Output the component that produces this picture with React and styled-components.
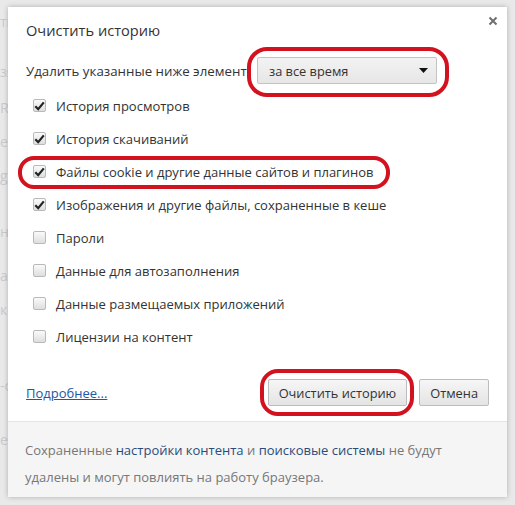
import React from "react";
import styled, { createGlobalStyle } from "styled-components";

const Global = createGlobalStyle`
  html, body { margin: 0; padding: 0; }
  body {
    background: #e9e9e9;
    font-family: "Open Sans", "Noto Sans", sans-serif;
    color: #333;
  }
`;

const Page = styled.div`
  position: relative;
  width: 515px;
  height: 505px;
  overflow: hidden;
  background: #e9e9e9;
`;

const Backdrop = styled.div`
  display: flex;
  flex-direction: column;
  padding-top: 12px;
`;

const BackLine = styled.div`
  height: ${(p) => p.$h}px;
  white-space: nowrap;
  font-size: 14px;
  line-height: 20px;
  color: #c9c9cf;
`;

const Dialog = styled.div`
  position: absolute;
  left: 8px;
  top: 7px;
  width: 499px;
  height: 490px;
  background: #fff;
  box-shadow: 0 0 5px rgba(0, 0, 0, 0.25);
  display: flex;
  flex-direction: column;
`;

const Body = styled.div`
  padding: 13px 18px 0 18px;
  flex: 1;
  display: flex;
  flex-direction: column;
`;

const Title = styled.h1`
  margin: 0;
  font-size: 14.6px;
  font-weight: 400;
  line-height: 20px;
  color: #333;
`;

const Close = styled.button`
  position: absolute;
  right: 7px;
  top: 7px;
  width: 14px;
  height: 14px;
  padding: 0;
  border: 0;
  background: none;
  display: flex;
  align-items: center;
  justify-content: center;
`;

const SelectRow = styled.div`
  display: flex;
  align-items: center;
  margin-top: 17px;
  height: 27px;
`;

const Label = styled.div`
  width: 231px;
  flex: none;
  white-space: nowrap;
  font-size: 13.3px;
  color: #333;
`;

const SelectWrap = styled.div`
  position: relative;
`;

const Select = styled.div`
  width: 180px;
  height: 27px;
  box-sizing: border-box;
  border: 1px solid #c3c3c3;
  border-radius: 2px;
  background: linear-gradient(#f3f3f3, #e6e6e6);
  display: flex;
  align-items: center;
  justify-content: space-between;
  padding: 0 8px 0 11px;
  font-size: 12.8px;
  color: #333;
`;

const Oval = styled.div`
  position: absolute;
  left: ${(p) => p.$l}px;
  right: ${(p) => p.$r}px;
  top: ${(p) => p.$t}px;
  bottom: ${(p) => p.$b}px;
  border: 4px solid #d3121f;
  border-radius: ${(p) => p.$rad}px;
  pointer-events: none;
`;

const List = styled.div`
  display: flex;
  flex-direction: column;
  margin-top: 5px;
`;

const Row = styled.label`
  position: relative;
  display: flex;
  align-items: center;
  height: 33px;
  padding-left: 7px;
  font-size: 13px;
  color: #333;
`;

const Box = styled.span`
  width: 13px;
  height: 13px;
  box-sizing: border-box;
  border: 1px solid #b9b9b9;
  border-radius: 2px;
  background: linear-gradient(#fafafa, #dedede);
  margin-right: 10px;
  display: flex;
  align-items: center;
  justify-content: center;
  flex: none;
`;

const Footer = styled.div`
  display: flex;
  align-items: center;
  justify-content: space-between;
  margin-top: auto;
  height: 27px;
  margin-bottom: 15px;
`;

const MoreLink = styled.a`
  font-size: 13px;
  color: #2057a6;
  text-decoration: underline;
`;

const Buttons = styled.div`
  display: flex;
  gap: 12px;
`;

const BtnWrap = styled.div`
  position: relative;
`;

const Button = styled.button`
  height: 27px;
  box-sizing: border-box;
  padding: 0 10px;
  border: 1px solid #bcbcbc;
  border-radius: 2px;
  background: linear-gradient(#f6f6f6, #e4e4e4);
  font-family: inherit;
  font-size: 12.8px;
  color: #333;
`;

const Note = styled.div`
  border-top: 1px solid #e4e4e4;
  background: #f5f5f5;
  height: 76px;
  box-sizing: border-box;
  padding: 15px 18px 0 17px;
  font-size: 13px;
  line-height: 27px;
  color: #777;
`;

const NoteLink = styled.a`
  color: #2a4b7c;
  text-decoration: none;
`;

const Check = () => (
  <svg width="11" height="10" viewBox="0 0 11 10">
    <path d="M1.3 5.2 L4.2 8.2 L9.8 1.4" fill="none" stroke="#222" strokeWidth="2.2" strokeLinejoin="miter" />
  </svg>
);

const items = [
  ["История просмотров", true],
  ["История скачиваний", true],
  ["Файлы cookie и другие данные сайтов и плагинов", true, true],
  ["Изображения и другие файлы, сохраненные в кеше", true],
  ["Пароли", false],
  ["Данные для автозаполнения", false],
  ["Данные размещаемых приложений", false],
  ["Лицензии на контент", false],
];

const backLines = [
  ["тг", 50],
  ["зя", 36],
  ["R", 34],
  ["ек", 34],
  ["gl", 56],
  ["н", 44],
  ["аз", 34],
  ["кс", 76],
  ["-с", 54],
  ["ен-", 40],
];

export default function App() {
  return (
    <>
      <Global />
      <Page>
        <Backdrop>
          {backLines.map(([t, h], i) => (
            <BackLine key={i} $h={h}>{t}</BackLine>
          ))}
        </Backdrop>
        <Dialog>
          <Close aria-label="Закрыть">
            <svg width="10" height="10" viewBox="0 0 10 10">
              <path d="M1.5 1.5 L8.5 8.5 M8.5 1.5 L1.5 8.5" stroke="#6f6f6f" strokeWidth="2" />
            </svg>
          </Close>
          <Body>
            <Title>Очистить историю</Title>
            <SelectRow>
              <Label>Удалить указанные ниже элемент</Label>
              <SelectWrap>
                <Select>
                  <span>за все время</span>
                  <svg width="9" height="5" viewBox="0 0 9 5">
                    <path d="M0 0 H9 L4.5 5 Z" fill="#111" />
                  </svg>
                </Select>
                <Oval $l={-10} $r={-12} $t={-10} $b={-13} $rad={20} />
              </SelectWrap>
            </SelectRow>
            <List>
              {items.map(([t, c, hl], i) => (
                <Row key={i}>
                  <Box>{c && <Check />}</Box>
                  {t}
                  {hl && <Oval $l={-8} $r={99} $t={1} $b={-1} $rad={16} />}
                </Row>
              ))}
            </List>
            <Footer>
              <MoreLink href="#">Подробнее...</MoreLink>
              <Buttons>
                <BtnWrap>
                  <Button>Очистить историю</Button>
                  <Oval $l={-8} $r={-7} $t={-10} $b={-10} $rad={18} />
                </BtnWrap>
                <Button>Отмена</Button>
              </Buttons>
            </Footer>
          </Body>
          <Note>
            Сохраненные <NoteLink href="#">настройки контента</NoteLink> и{" "}
            <NoteLink href="#">поисковые системы</NoteLink> не будут
            <br />
            удалены и могут повлиять на работу браузера.
          </Note>
        </Dialog>
      </Page>
    </>
  );
}
